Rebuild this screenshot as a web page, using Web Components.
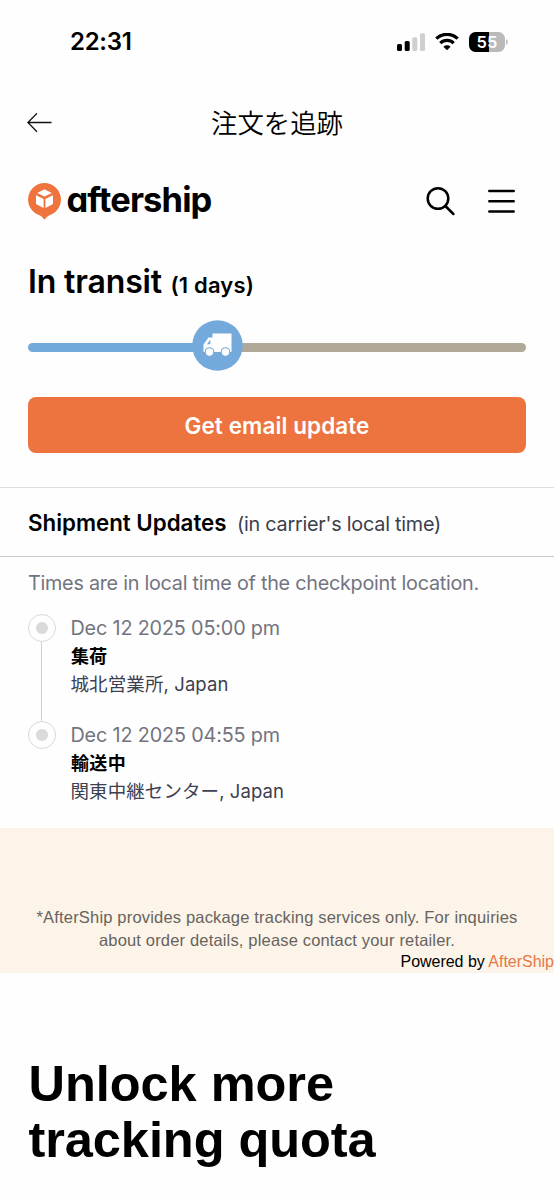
<!DOCTYPE html>
<html lang="ja">
<head>
<meta charset="utf-8">
<meta name="viewport" content="width=device-width">
<title>注文を追跡</title>
<style>
html,body{margin:0;padding:0;background:#fefefe}
body{font-family:Inter,"Noto Sans CJK JP",sans-serif;color:#000;overflow:hidden}
</style>
</head>
<body>
<tracking-page></tracking-page>
<script>
const define=(name,html,setup)=>{
  const t=document.createElement('template');t.innerHTML=html;
  customElements.define(name,class extends HTMLElement{
    constructor(){super();this.attachShadow({mode:'open'}).append(t.content.cloneNode(true));}
    connectedCallback(){if(setup)setup(this,this.shadowRoot);}
  });
};

/* One line of text, tracked out or in to span the given width. */
define('text-line',`<style>
:host{display:block;white-space:nowrap;line-height:1.2}
span{display:inline-block}
</style><span><slot></slot></span>`,(el,root)=>{
  const s=root.querySelector('span'),w=+el.getAttribute('span');
  if(!w)return;
  const n=[...el.textContent].length;
  s.style.letterSpacing=((w-s.getBoundingClientRect().width)/n).toFixed(3)+'px';
});

define('status-bar',`<style>
:host{display:flex;justify-content:space-between;align-items:center;height:83px;padding:0 46px 0 70px;box-sizing:border-box}
text-line{font-size:24px;font-weight:600;padding-top:2px}
.r{display:flex;align-items:center}
.bat{display:flex;align-items:center;margin-left:10px}
.cell{width:36px;height:20px;border-radius:6.5px;background:linear-gradient(90deg,#000 0 19.5px,#bababa 19.5px);color:#fff;display:flex;align-items:center;justify-content:center;font-size:16.5px;font-weight:600;line-height:20px}
svg{display:block}
</style>
<text-line span="61.5">22:31</text-line>
<div class="r">
<svg width="28" height="18" viewBox="0 0 28 18"><rect x="0" y="11" width="5" height="7" rx="1.5"/><rect x="7.7" y="8" width="5" height="10" rx="1.5"/><rect x="15.3" y="4.3" width="5" height="13.7" rx="1.5" fill="#cfcfcf"/><rect x="23" y="0.3" width="5" height="17.7" rx="1.5" fill="#cfcfcf"/></svg>
<svg style="margin-left:10px" width="24" height="18" viewBox="0 0 24 18" fill="none" stroke="#000" stroke-width="3.2"><path d="M1.3 5.7a15.2 15.2 0 0 1 21.4 0"/><path d="M5.3 10.1a9.6 9.6 0 0 1 13.4 0"/><path d="M12 17.3 8.4 13.7a5.1 5.1 0 0 1 7.2 0Z" fill="#000" stroke="none"/></svg>
<div class="bat"><div class="cell">55</div><svg width="3" height="8" viewBox="0 0 3 8"><path d="M1 1q1.8 1 1.8 3T1 7Z" fill="#bababa"/></svg></div>
</div>`);

define('nav-bar',`<style>
:host{display:grid;grid-template-columns:1fr auto 1fr;align-items:center;height:80px;padding:0 27px;box-sizing:border-box}
text-line{font-size:26.4px;font-weight:350;padding-top:1px}
svg{display:block}
</style>
<svg width="25" height="20" viewBox="0 0 25 20" fill="none" stroke="#111" stroke-width="1.3"><path d="M24.5 9.5H.9M10 .3.9 9.5 10 18.7"/></svg>
<text-line span="132">注文を追跡</text-line><span></span>`);

define('brand-header',`<style>
:host{display:flex;align-items:center;height:76px;padding:0 39px 0 28px;box-sizing:border-box}
svg{display:block}
text-line{font-size:34.5px;font-weight:650;font-feature-settings:"cv11","ss03";margin:-2px auto 0 5.5px}
.m{margin-left:32px}
</style>
<svg width="33" height="37" viewBox="0 0 33 37"><path d="M16.5 0a16.5 16.5 0 0 1 5.6 32c-2.4.9-3.5 2-5.6 4.7-2.1-2.7-3.2-3.8-5.6-4.7A16.5 16.5 0 0 1 16.5 0Z" fill="#ee733d"/><path d="M16.5 6.3 23.8 9.9 16.5 13.6 9.2 9.9ZM8 12.2l7.6 3.9v8.8L8.8 21.5Q8 21 8 20ZM25 12.2l-7.6 3.9v8.8l6.8-3.4q.8-.5.8-1.5Z" fill="#fff"/></svg>
<text-line span="145">aftership</text-line>
<svg width="30" height="30" viewBox="0 0 30 30" fill="none" stroke="#000" stroke-width="2.5" stroke-linecap="round"><circle cx="12" cy="12.5" r="10.3"/><path d="m19.4 20 8 8"/></svg>
<svg class="m" width="27" height="24" viewBox="0 0 27 24" stroke="#000" stroke-width="2.5" stroke-linecap="round"><path d="M1.3 2h24.4M1.3 12.2h24.4M1.3 22.4h24.4"/></svg>`);

define('transit-status',`<style>
:host{display:block;padding:0 28px;height:249px;box-sizing:border-box;border-bottom:1px solid #dfdfe2}
.h{display:flex;align-items:center;height:85px;font-weight:600}
.a{font-size:32px;margin-top:1px}.b{font-size:22px;margin:7px 0 0 8.5px;font-weight:560}
.bar{display:grid;align-items:center;height:51px;margin-top:-4px}
.bar>*{grid-area:1/1}
.track{height:9px;border-radius:5px;background:linear-gradient(90deg,#74aadb 0 189px,#b0a999 189px);margin-top:4px}
.bar svg{margin:-1px 0 0 163.5px;display:block}
button{all:unset;display:flex;justify-content:center;align-items:center;width:100%;height:56px;margin-top:26px;border-radius:8px;background:#ed743e;color:#fff;font-size:22.5px;font-weight:600}
button text-line{padding-top:1px}
</style>
<div class="h"><text-line class="a" span="134">In transit</text-line><text-line class="b" span="83.5">(1 days)</text-line></div>
<div class="bar"><div class="track"></div>
<svg width="51" height="51" viewBox="0 0 51 51"><circle cx="25.5" cy="25.5" r="25.3" fill="#74aadb"/><path d="M20.5 13.500H39.500V32H11.500V24.500L16.500 17.500H20.500Z" fill="#fff"/><path d="M18.300 19.500V24.300H15Z" fill="#74aadb"/><g fill="#fff" stroke="#74aadb" stroke-width="1.1"><circle cx="17.5" cy="32" r="4.300"/><circle cx="33.5" cy="32" r="4.300"/></g></svg></div>
<button><text-line span="185">Get email update</text-line></button>`);

define('updates-heading',`<style>
:host{display:flex;align-items:center;height:69px;padding:3px 28px 0;box-sizing:border-box;border-bottom:1px solid #c9cbd1}
.a{font-size:22.3px;font-weight:600}.b{font-size:19.8px;color:#3c3f4d;margin:2px 0 0 10.5px}
</style><text-line class="a" span="198.5">Shipment Updates</text-line><text-line class="b" span="204">(in carrier's local time)</text-line>`);

define('check-point',`<style>
:host{display:grid;grid-template-columns:28px 1fr;column-gap:15px;height:107px}
.rail{display:flex;flex-direction:column;align-items:center}
.dot{width:28px;height:28px;box-sizing:border-box;border:1.5px solid #d8d9dc;border-radius:50%;display:grid;place-items:center;flex:none}
.dot:after{content:"";width:11.5px;height:11.5px;border-radius:50%;background:#dadadc}
.line{width:1px;flex:1;background:#cfd0d4;margin-left:-1px}
:host([last]) .line{display:none}
::slotted(*){height:28px;line-height:28px!important}
::slotted([slot=date]){font-size:19.8px;color:#72747f;margin-left:-.5px}
::slotted([slot=state]){font-size:18px;font-weight:700;padding-top:1px;height:27px}
::slotted([slot=place]){font-size:18.5px;color:#3c4050;margin-left:-.5px}
</style><div class="rail"><div class="dot"></div><div class="line"></div></div>
<div><slot name="date"></slot><slot name="state"></slot><slot name="place"></slot></div>`);

define('checkpoint-list',`<style>
:host{display:block;height:271px;padding:0 28px;overflow:hidden;box-sizing:border-box}
.n{font-size:19.8px;color:#72747f;height:57px;line-height:52px}
</style>
<text-line class="n" span="451">Times are in local time of the checkpoint location.</text-line>
<check-point><text-line slot="date" span="209.5">Dec 12 2025 05:00 pm</text-line><text-line slot="state" span="36">集荷</text-line><text-line slot="place" span="158">城北営業所, Japan</text-line></check-point>
<check-point last><text-line slot="date" span="209.5">Dec 12 2025 04:55 pm</text-line><text-line slot="state" span="55">輸送中</text-line><text-line slot="place" span="213.5">関東中継センター, Japan</text-line></check-point>`);

define('service-notice',`<style>
:host{display:block;height:144.5px;background:#fcf4e8;font-family:"Liberation Sans",sans-serif;font-size:16px;box-sizing:border-box;padding-top:78px}
.l{display:flex;justify-content:center;height:23px;color:#67635f;font-size:16.5px}
.l text-line{line-height:23px}
.p{display:flex;justify-content:flex-end;height:20px}
.p text-line{line-height:20px}
a{color:#e87748}
</style>
<div class="l"><text-line span="481">*AfterShip provides package tracking services only. For inquiries</text-line></div>
<div class="l"><text-line span="356">about order details, please contact your retailer.</text-line></div>
<div class="p"><text-line span="153.5">Powered by <a>AfterShip</a></text-line></div>`);

define('quota-headline',`<style>
:host{display:block;padding:83px 28px 0 28.5px;font:bold 50.5px/56px "Liberation Sans",sans-serif}
text-line{line-height:56px}
</style><text-line span="305.5">Unlock more</text-line><text-line span="347">tracking quota</text-line>`);

define('tracking-page',`<style>:host{display:block;height:1200px;overflow:hidden}</style>
<status-bar></status-bar><nav-bar></nav-bar><brand-header></brand-header><transit-status></transit-status><updates-heading></updates-heading><checkpoint-list></checkpoint-list><service-notice></service-notice><quota-headline></quota-headline>`);
</script>
</body>
</html>
